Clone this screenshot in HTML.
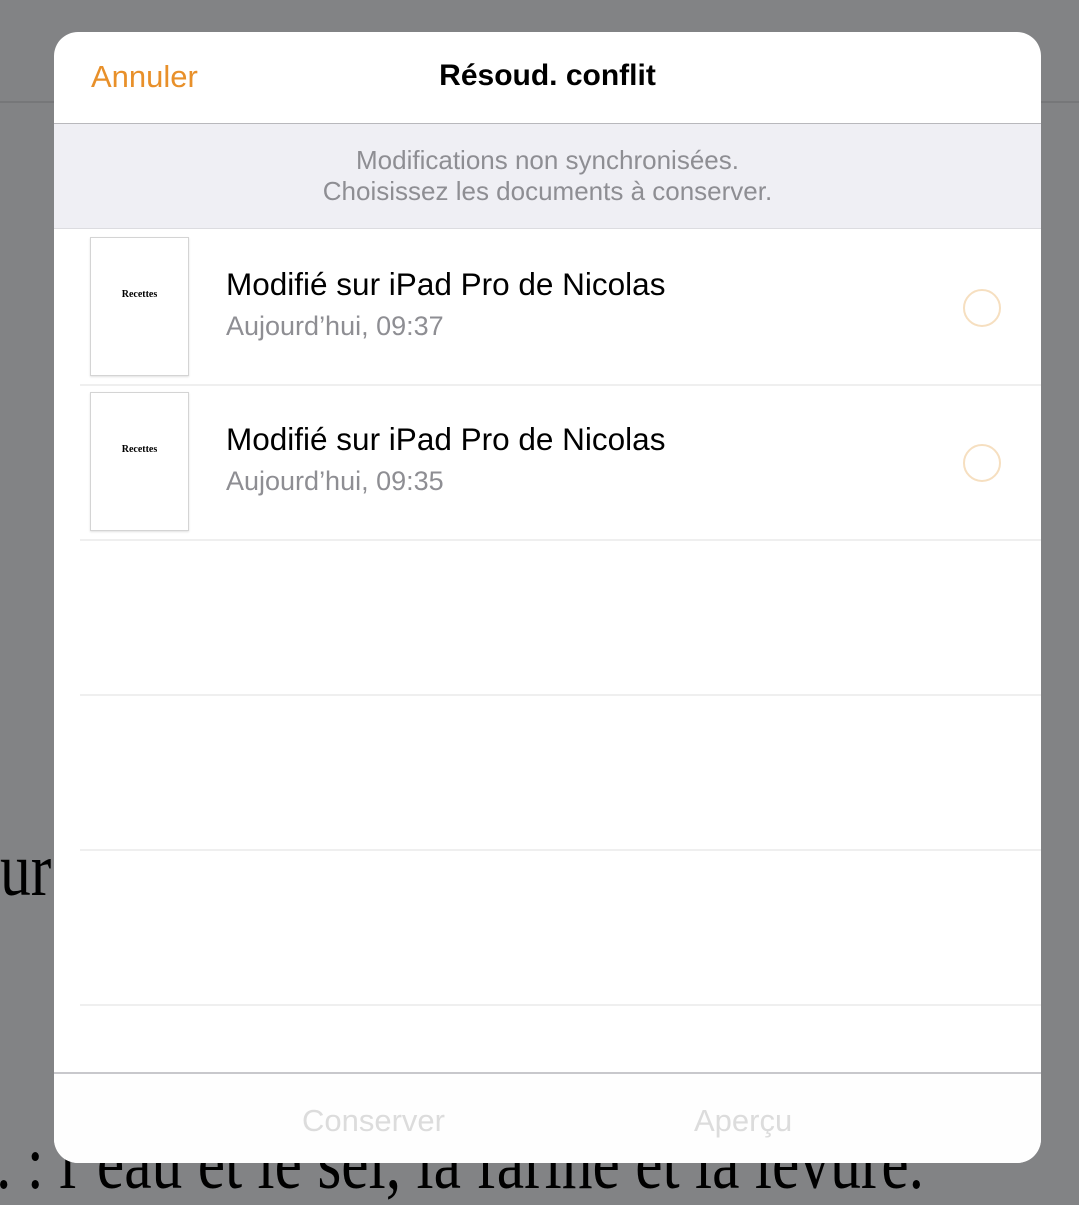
<!DOCTYPE html>
<html><head><meta charset="utf-8"><style>
html,body{margin:0;padding:0;}
body{width:1079px;height:1200px;background:#828385;position:relative;overflow:hidden;font-family:"Liberation Sans",sans-serif;}
.bg{position:absolute;font-family:"Liberation Serif",serif;color:#000;font-size:76px;line-height:1;transform:scaleX(0.81);transform-origin:left top;white-space:nowrap;}
.topline{position:absolute;left:0;right:0;top:101px;height:2px;background:#767779;}
.dlg{position:absolute;left:54px;top:32px;width:987px;height:1131px;background:#fff;border-radius:24px;overflow:hidden;}
.hdr{position:absolute;left:0;top:0;width:100%;height:91px;border-bottom:1px solid #b8b8bc;}
.cancel{position:absolute;left:37px;top:27px;font-size:31px;color:#e8902a;}
.title{position:absolute;left:0;width:100%;top:27px;text-align:center;font-size:30px;font-weight:bold;color:#000;}
.info{position:absolute;left:0;top:92px;width:100%;height:104px;background:#efeff4;border-bottom:1px solid #dcdce0;text-align:center;color:#8e8e93;font-size:26px;line-height:31px;}
.info div{padding-top:21px;}
.row{position:absolute;left:26px;width:961px;height:155px;border-bottom:2px solid #efefef;}
.thumb{position:absolute;left:10px;top:8px;width:97px;height:137px;border:1px solid #d4d4d4;box-shadow:0 1px 2px rgba(0,0,0,.12);background:#fff;}
.thumb span{position:absolute;left:0;width:100%;top:51px;text-align:center;font-family:"Liberation Serif",serif;font-weight:bold;font-size:10px;}
.t1{position:absolute;left:146px;top:37px;font-size:31.5px;color:#000;}
.t2{position:absolute;left:146px;top:82px;font-size:27px;color:#8e8e93;}
.radio{position:absolute;left:883px;top:60px;width:34px;height:34px;border:2px solid #f6dfc0;border-radius:50%;}
.ftr{position:absolute;left:0;top:1040px;width:100%;height:91px;border-top:2px solid #c8c8cc;background:#fefefe;}
.ftr span{position:absolute;top:29px;font-size:31px;color:#dcdcdc;}
</style></head><body>
<div class="topline"></div>
<div class="bg" style="left:0;top:832px;">ur</div>
<div class="bg" style="left:-4px;top:1125px;">. : l’eau et le sel, la farine et la levure.</div>
<div class="dlg">
  <div class="hdr"><div class="cancel">Annuler</div><div class="title">Résoud. conflit</div></div>
  <div class="info"><div>Modifications non synchronisées.<br>Choisissez les documents à conserver.</div></div>
  <div class="row" style="top:197px;"><div class="thumb"><span>Recettes</span></div><div class="t1">Modifié sur iPad Pro de Nicolas</div><div class="t2">Aujourd’hui, 09:37</div><div class="radio"></div></div>
  <div class="row" style="top:352px;"><div class="thumb"><span>Recettes</span></div><div class="t1">Modifié sur iPad Pro de Nicolas</div><div class="t2">Aujourd’hui, 09:35</div><div class="radio"></div></div>
  <div class="row" style="top:507px;"></div>
  <div class="row" style="top:662px;"></div>
  <div class="row" style="top:817px;"></div>
  <div class="ftr"><span style="left:248px;">Conserver</span><span style="left:640px;">Aperçu</span></div>
</div>
</body></html>
